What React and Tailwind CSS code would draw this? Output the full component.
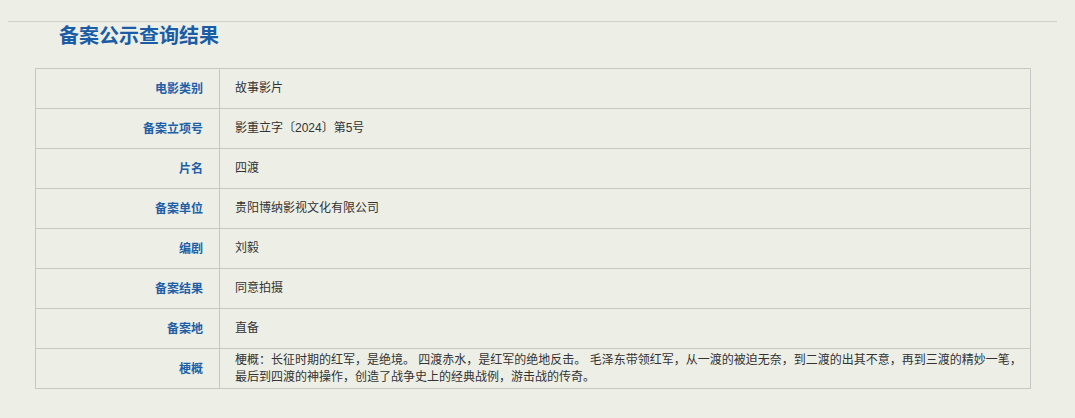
import React from 'react';

const rows = [
  ['电影类别', '故事影片'],
  ['备案立项号', '影重立字〔2024〕第5号'],
  ['片名', '四渡'],
  ['备案单位', '贵阳博纳影视文化有限公司'],
  ['编剧', '刘毅'],
  ['备案结果', '同意拍摄'],
  ['备案地', '直备'],
  [
    '梗概',
    '梗概：长征时期的红军，是绝境。 四渡赤水，是红军的绝地反击。 毛泽东带领红军，从一渡的被迫无奈，到二渡的出其不意，再到三渡的精妙一笔，最后到四渡的神操作，创造了战争史上的经典战例，游击战的传奇。',
  ],
];

const App = () => {
  return (
    <div
      className="w-full h-[418px] bg-[#edefe7] pt-[21px]"
      style={{ fontFamily: '"Liberation Sans", "Noto Sans CJK SC", sans-serif' }}
    >
      <div className="ml-[8px] w-[1049px] border-t border-[#cfd1cb]" />
      <h1 className="pl-[59px] text-[20px] leading-[28px] font-bold text-[#1b5ca7] mb-[18px]">
        备案公示查询结果
      </h1>
      <table className="ml-[35px] w-[996px] border-collapse border border-[#c6c8c3] text-[12px]">
        <tbody>
          {rows.map(([label, value]) => (
            <tr key={label} className="h-[40px]">
              <td className="w-[184px] border border-[#c6c8c3] pr-[16px] text-right font-bold text-[#1d60a8] align-middle">
                {label}
              </td>
              <td className="border border-[#c6c8c3] pl-[15px] pr-[1px] text-[#333] leading-[17px] align-middle">
                {value}
              </td>
            </tr>
          ))}
        </tbody>
      </table>
    </div>
  );
};

export default App;
